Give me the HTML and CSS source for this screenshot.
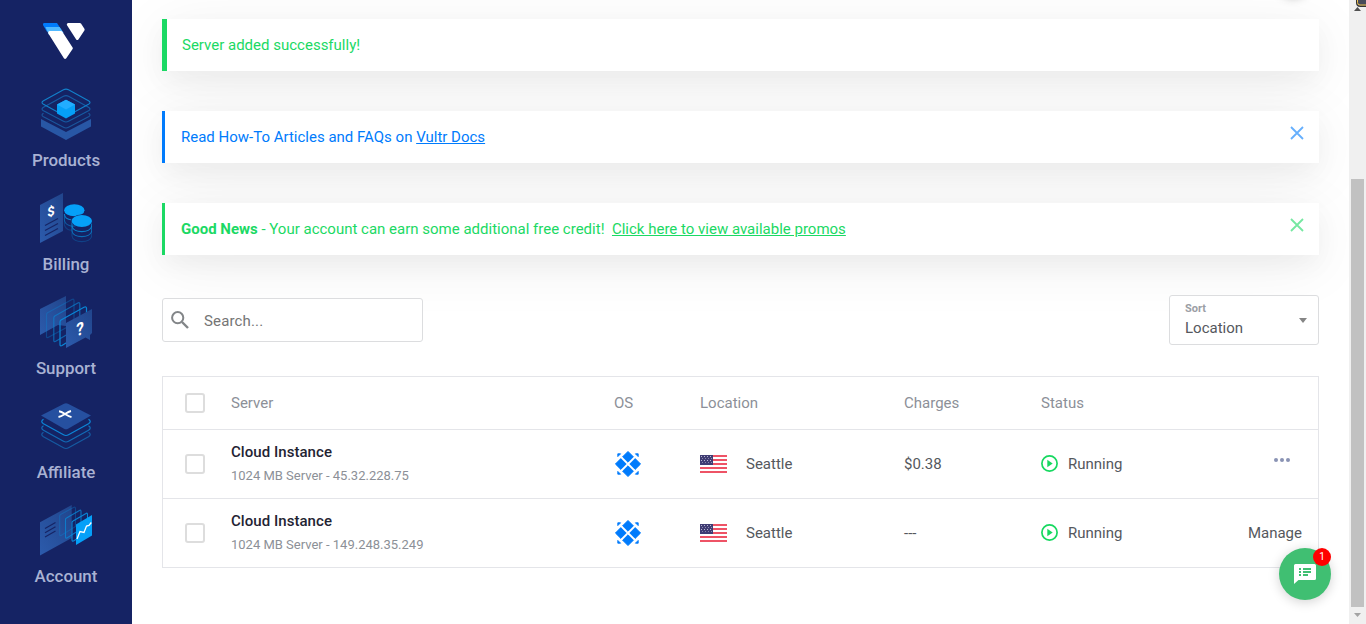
FILE: index.html
```html
<!DOCTYPE html>
<html lang="en">
<head>
<meta charset="utf-8">
<title>Cloud Instances</title>
<link rel="stylesheet" href="styles.css">
</head>
<body>
<svg width="0" height="0" class="defs">
  <defs>
    <linearGradient id="face" x1="0" y1="1" x2="1" y2="0"><stop offset="0" stop-color="#2c5bac"/><stop offset="1" stop-color="#21458c"/></linearGradient>
    <symbol id="os" viewBox="615 451 26 26">
      <g fill="#007bfc" stroke="#007bfc" stroke-width=".9" stroke-linejoin="round">
        <path d="M628 451.400l5.400 5.400-5.400 5.400-5.400-5.400zM628 465.800l5.400 5.400-5.400 5.400-5.400-5.400zM620.800 458.600l5.400 5.400-5.400 5.400-5.400-5.400zM635.200 458.600l5.400 5.400-5.400 5.400-5.400-5.400z"/>
        <path d="M617.800 453.800h2.800l-2.800 2.800zM638.200 453.800h-2.800l2.800 2.800zM617.800 474.200h2.800l-2.800-2.800zM638.200 474.200h-2.800l2.800-2.800z"/>
      </g>
    </symbol>
    <pattern id="stars" width="3" height="4" patternUnits="userSpaceOnUse"><rect x="1" y="1" width="1" height="1" fill="#b9b7d2"/><rect x="2.400" y="3" width="1" height="1" fill="#b9b7d2"/></pattern>
    <symbol id="flag" viewBox="0 0 27 18">
      <path fill="#fff" d="M0 0h27v18H0z"/>
      <path fill="#ee5366" d="M0 0h27v2H0zM0 4h27v2H0zM0 8h27v2H0zM0 12h27v2H0zM0 16h27v2H0z"/>
      <path fill="#403d74" d="M0 0h13v10H0z"/><path fill="url(#stars)" d="M1 1h11v8H1z"/>
    </symbol>
    <symbol id="run" viewBox="0 0 17 17"><circle cx="8.500" cy="8.500" r="7.600" fill="none" stroke="#17d860" stroke-width="1.700"/><path d="M6.300 4.700l5.400 3.800-5.400 3.800z" fill="#17d860"/></symbol>
    <symbol id="close" viewBox="0 0 14 14"><path d="M1 1l12 12M13 1L1 13" fill="none" stroke="currentColor" stroke-width="1.800"/></symbol>
  </defs>
</svg>

<aside class="sidebar">
  <svg class="logo" viewBox="42 22 44 38">
    <path fill="#007bfc" d="M44.300 23H57l5.500 8.500H46.800L43 25q-.5-2 1.300-2z"/>
    <path fill="#51b9ff" d="M45.400 27h14.200l4 6-14.600 2z"/>
    <path fill="#fff" d="M49.500 31h11.700q.6 0 1 .6L72.600 47.500q.5.800 0 1.600L66.300 58.300q-1.200 1.500-2.400 0L48.200 33.200Q47.800 31.200 49.500 31zM68.500 23h11.300q.8 0 1.200.6l3.400 5.200q.5.800 0 1.600l-6 9.200q-1.200 1-2.200 0L67 25.200q-.8-1.800 1.500-2.200z"/>
  </svg>
  <nav class="nav">
    <a class="nav-item">
      <svg viewBox="40 88 52 52">
        <path fill="#2857a5" d="M41 119l25 13 25-13v7.500L66 140l-25-13.500z"/>
        <g fill="none" stroke-width="1.100" stroke-linejoin="round">
          <path stroke="#1b569c" d="M43.500 113.200Q40.500 115 43.500 116.800L63.500 127.300Q66 128.600 68.500 127.300L88.500 116.800Q91.500 115 88.500 113.200"/>
          <path stroke="#165ba3" d="M43.500 107.200L63.500 96.200Q66 95 68.500 96.200L88.500 107.200Q91.500 109 88.500 110.800L68.500 121.300Q66 122.600 63.500 121.300L43.500 110.800Q40.500 109 43.500 107.200z"/>
          <path stroke="#1280cb" d="M43.500 100.700L63.500 89.700Q66 88.500 68.500 89.700L88.500 100.700Q91.500 102.500 88.500 104.300L68.500 115.300Q66 116.600 63.500 115.300L43.500 104.300Q40.500 102.500 43.500 100.700z"/>
        </g>
        <path fill="#05a0f8" d="M57 104.500l9-4.800 9 4.800v9l-9 4.900-9-4.900z"/><path fill="#22adff" d="M57 104.500l9-4.800 9 4.800-9 5z"/>
      </svg><span>Products</span></a>
    <a class="nav-item">
      <svg viewBox="40 192 52 52">
        <path fill="url(#face)" d="M40 205l23-12v38l-23 12z"/>
        <path stroke="#162464" stroke-width="1.200" d="M45 225.500l13-7M45 230.500l13-7M45 235.500l13-7"/>
        <text class="doc-glyph" font-size="13" transform="matrix(1 -.3 0 1 51 216)">$</text>
        <g fill="none" stroke="#0a7fca" stroke-width="1.100">
          <path d="M64.400 214c0 7 14 8 18 3"/><path opacity=".6" d="M64.400 214v6c1 6 8 7 12 5.500"/><path opacity=".3" d="M64.400 220v5c1 4 5 5.500 8 5"/>
          <path d="M72 221v5c1 7.500 18.500 7.500 19.700 0v-5"/><path opacity=".8" d="M72 226v5c1 7.500 18.500 7.500 19.700 0v-5"/><path opacity=".35" d="M72 231v5c1 7.500 18.500 7.500 19.700 0v-5"/>
        </g>
        <ellipse cx="74.300" cy="210.300" rx="10.200" ry="6" fill="#05a0f8"/><ellipse cx="81.800" cy="221" rx="10.700" ry="6.500" fill="#162464"/><ellipse cx="81.800" cy="221" rx="10.200" ry="6" fill="#05a0f8"/>
      </svg><span>Billing</span></a>
    <a class="nav-item">
      <svg viewBox="40 296 52 52">
        <path fill="url(#face)" d="M40 309l26-13v30l-8-1-18 10z"/>
        <g fill="none" stroke="#0a86d6" stroke-width="1.200" stroke-linejoin="round">
          <path opacity=".35" d="M48 312.500l24-13q2-1 2 1v23l-26 14q-1.500.5-1.500-1v-22q0-1.200 1.500-2z"/>
          <path opacity=".65" d="M54.800 316l23-13q2-1 2 1v23l-24.500 14.500q-1.500.5-1.500-1v-22.500q0-1.200 1-2z"/>
          <path d="M61 320l23-12.700q2.500-1 2.500 1v22L62 345.500q-2 1-2-1v-22.500q0-1.200 1-2z"/>
        </g>
        <path fill="url(#face)" d="M66 323l26-14v24l-2 2v5l-4.500-2.500L66 348z"/>
        <text class="doc-glyph" font-size="18" transform="matrix(.85 -.3 0 1 80 335.200)">?</text>
      </svg><span>Support</span></a>
    <a class="nav-item">
      <svg viewBox="40 400 52 52">
        <g fill="none" stroke-width="1.200">
          <path stroke="#155aa1" d="M43.500 432.200Q40 434.500 43.500 436.800L63.500 447.800Q66 449.200 68.500 447.800L88.500 436.800Q92 434.500 88.500 432.200"/>
          <path stroke="#126bb6" d="M43.500 425.700Q40 428 43.500 430.300L63.500 441.300Q66 442.700 68.500 441.300L88.500 430.300Q92 428 88.500 425.700"/>
          <path stroke="#0c85d7" d="M43.500 419.200Q40 421.500 43.500 423.800L63.500 434.800Q66 436.200 68.500 434.800L88.500 423.800Q92 421.500 88.500 419.200"/>
        </g>
        <path fill="#2650a0" d="M41 415.500l23-11.800q2-1 4 0l23 11.800-23 13.300q-2 1-4 0z"/>
        <path fill="none" stroke="#fff" stroke-width="1.900" d="M59 411.300q2 .2 6 2.700t6.500 3.200M71 411q-2 .5-6 3t-6.500 3"/>
      </svg><span>Affiliate</span></a>
    <a class="nav-item">
      <svg viewBox="40 504 52 52">
        <path fill="url(#face)" d="M40 522.300L71.700 505v33L40 555.500z"/>
        <path stroke="#162464" stroke-width="1.200" d="M45 528.500l10.500-6M45 532.800l10.500-6M45 537l10.500-6"/>
        <g fill="none" stroke="#0a86d6" stroke-width="1.100">
          <path opacity=".35" d="M60.500 514.500l13-7q2-1 2 1v18L61 535.500q-1.300.5-1.300-1V516q0-1 .8-1.500z"/>
          <path opacity=".8" d="M66.500 518l13-7.500q1.500-1 1.500 1v17.500L67 538q-1.500.5-1.500-1v-17.500q0-1 1-1.500z"/>
          <path d="M73 521l13-7.500q1.500-1 1.500 1v17.500L73.500 541q-1.500.5-1.500-1v-17.500q0-1 1-1.500z"/>
        </g>
        <path fill="#05a0f8" d="M76 524.500l16-9.500v20.500L76 545z"/><path fill="none" stroke="#fff" stroke-width="1.300" d="M77 539l3-7.500 4 1 2.500-6.500 2.500-.5 2.300-3"/>
      </svg><span>Account</span></a>
  </nav>
</aside>

<main class="content">
  <div class="add-shadow"></div>
  <div class="alert alert-added"><p>Server added successfully!</p></div>
  <div class="alert alert-info"><p>Read How-To Articles and FAQs on <a>Vultr Docs</a></p><svg class="close"><use href="#close"/></svg></div>
  <div class="alert alert-promo"><p><b>Good News</b> - Your account can earn some additional free credit!&nbsp; <a>Click here to view available promos</a></p><svg class="close"><use href="#close"/></svg></div>

  <div class="toolbar">
    <label class="search">
      <svg class="search-icon" viewBox="0 0 18 18"><circle cx="6.700" cy="6.700" r="5.600" fill="none" stroke="#828588" stroke-width="2"/><path d="M11 11l6 6" stroke="#828588" stroke-width="2.400"/></svg>
      <span>Search...</span>
    </label>
    <div class="sort"><div><small>Sort</small><span>Location</span></div><i class="caret"></i></div>
  </div>

  <section class="table">
    <div class="row head"><i class="check"></i><span>Server</span><span>OS</span><span>Location</span><span>Charges</span><span>Status</span></div>
    <div class="row">
      <i class="check"></i>
      <div class="server"><strong>Cloud Instance</strong><small>1024 MB Server - 45.32.228.75</small></div>
      <svg class="os"><use href="#os"/></svg>
      <div class="place"><svg class="flag"><use href="#flag"/></svg><span>Seattle</span></div>
      <span>$0.38</span>
      <div class="status"><svg class="run"><use href="#run"/></svg><span>Running</span></div>
      <svg class="dots" viewBox="0 0 18 6"><g fill="#8a93b4"><circle cx="3" cy="3" r="2"/><circle cx="9" cy="3" r="2"/><circle cx="15" cy="3" r="2"/></g></svg>
    </div>
    <div class="row">
      <i class="check"></i>
      <div class="server"><strong>Cloud Instance</strong><small>1024 MB Server - 149.248.35.249</small></div>
      <svg class="os"><use href="#os"/></svg>
      <div class="place"><svg class="flag"><use href="#flag"/></svg><span>Seattle</span></div>
      <span>---</span>
      <div class="status"><svg class="run"><use href="#run"/></svg><span>Running</span></div>
      <span class="manage">Manage</span>
    </div>
  </section>
</main>

<div class="scrollbar">
  <svg class="arrow" viewBox="0 0 17 17"><path fill="#505050" d="M5 11h7L8.500 7z"/></svg>
  <div class="thumb"></div>
  <svg class="arrow" viewBox="0 0 17 17"><path fill="#a3a3a3" d="M5 6h7l-3.500 4z"/></svg>
</div>

<svg class="pointer" viewBox="0 0 10 7"><path d="M.5-1v4q0 3.500 3 3.500h8V-1z" fill="#474b59" stroke="#333"/><path d="M1.500 0v2.500q0 2.500 2.500 2.500h6" fill="none" stroke="#f0c14b"/></svg>

<div class="chat">
  <svg viewBox="0 0 22 20"><path fill="#fff" d="M1.500 0h19q1.500 0 1.500 1.500v13q0 1.500-1.500 1.500H4.500L0 20V1.500Q0 0 1.500 0z"/><path fill="#40bf72" d="M5 4h2v2H5zM9 4h8v2H9zM5 7h2v2H5zM9 7h8v2H9zM5 10h2v2H5zM9 10h5v2H9z"/></svg>
  <span class="badge">1</span>
</div>
</body>
</html>
```
FILE: styles.css
```css
* { box-sizing: border-box; }
body {
  margin: 0;
  height: 624px;
  display: flex;
  overflow: hidden;
  background: #fff;
  color: #55585d;
  font: 15px/20px Roboto, sans-serif;
}
p { margin: 0; }
svg { display: block; flex: none; }
.defs { position: absolute; }

.sidebar {
  width: 132px;
  flex: none;
  padding-top: 22px;
  background: #152364;
  display: flex;
  flex-direction: column;
  align-items: center;
  z-index: 1;
}
.logo { width: 44px; height: 38px; margin-right: 4px; }
.nav { display: flex; flex-direction: column; gap: 20px; margin-top: 28px; }
.nav-item {
  height: 84px;
  display: flex;
  flex-direction: column;
  align-items: center;
  gap: 10px;
  color: #a9b2d3;
  font-size: 16.900px;
  font-weight: 500;
}
.nav-item svg { width: 52px; height: 52px; }
.doc-glyph { fill: #fff; font-family: Roboto, sans-serif; font-weight: 700; text-anchor: middle; }

.content {
  flex: 1;
  padding: 19px 30px 0;
  overflow: hidden;
  position: relative;
}
.add-shadow {
  position: absolute;
  right: 40px;
  top: -34px;
  width: 32px;
  height: 32px;
  border-radius: 50%;
  box-shadow: 0 0 10px rgba(0, 0, 0, .25);
}
.alert {
  height: 52px;
  margin-bottom: 40px;
  padding: 16px;
  display: flex;
  justify-content: space-between;
  border-left: 3px solid;
  background: #fff;
  box-shadow: 0 10px 60px rgba(0, 10, 10, .07), 0 10px 24px rgba(0, 10, 10, .04);
}
.alert a { text-decoration: underline; }
.alert-added { padding-left: 15px; color: #1bd964; border-left-width: 5px; }
.alert-info { color: #007bfc; }
.alert-promo { color: #1bd964; }
.alert b { font-weight: 700; }
.close { width: 14px; height: 14px; margin: -1px -1px 0 0; opacity: .6; }

.toolbar {
  display: flex;
  align-items: center;
  justify-content: space-between;
  height: 50px;
}
.search {
  width: 261px;
  height: 44px;
  display: flex;
  align-items: center;
  gap: 15px;
  padding-left: 8px;
  border: 1px solid #dcdddf;
  border-radius: 3px;
  background: #fff;
  color: #757575;
}
.search span { padding-top: 2px; letter-spacing: .15px; }
.search-icon { width: 18px; height: 18px; }
.sort {
  width: 150px;
  height: 50px;
  display: flex;
  align-items: center;
  justify-content: space-between;
  padding: 0 11px 0 15px;
  border: 1px solid #dcdddf;
  border-radius: 3px;
  background: #fff;
}
.sort div { display: flex; flex-direction: column; padding-top: 4px; }
.sort small { font-size: 11px; line-height: 12px; font-weight: 700; color: #9b9ea5; }
.sort span { line-height: 26px; }
.caret { border: 4px solid transparent; border-top: 5px solid #858585; border-bottom: 0; }

.table { margin-top: 31px; border: 1px solid #e4e5e9; background: #fff; }
.row {
  height: 69px;
  display: grid;
  grid-template-columns: 46px 383px 86px 204px 137px 150px 1fr;
  align-items: center;
  padding: 0 16px 0 22px;
  border-top: 1px solid #e4e5e9;
}
.row.head { height: 52px; border-top: 0; color: #8c9098; }
.check { width: 20px; height: 20px; border: 2px solid #ddd; border-radius: 3px; }
.server { display: flex; flex-direction: column; gap: 4px; }
.server strong { font-weight: 500; color: #1f2433; letter-spacing: .05px; }
.server small { font-size: 13px; color: #8c9097; }
.os { width: 26px; height: 26px; margin-left: 1px; }
.place { display: flex; align-items: center; gap: 19px; }
.flag { width: 27px; height: 18px; }
.status { display: flex; align-items: center; gap: 10px; }
.run { width: 17px; height: 17px; margin-bottom: 1px; }
.dots { width: 18px; height: 6px; justify-self: end; margin: 0 11px 8px 0; }
.manage { justify-self: end; }

.scrollbar { width: 17px; flex: none; display: flex; flex-direction: column; background: #f0f0f0; }
.arrow { width: 17px; height: 17px; }
.thumb { width: 13px; height: 428px; margin: auto 2px 0; background: #c1c1c1; }
.pointer { position: absolute; right: 0; top: 0; width: 10px; height: 7px; }

.chat {
  position: absolute;
  left: 1279px;
  top: 548px;
  width: 52px;
  height: 52px;
  display: flex;
  align-items: center;
  justify-content: center;
  border-radius: 50%;
  background: #40bf72;
  box-shadow: 0 2px 12px rgba(0, 0, 0, .18);
}
.chat svg { width: 22px; height: 20px; }
.badge {
  position: absolute;
  right: 0;
  top: 0;
  width: 18px;
  height: 18px;
  border-radius: 50%;
  background: #f00;
  color: #fff;
  font-size: 10px;
  line-height: 18px;
  text-align: center;
}
```
